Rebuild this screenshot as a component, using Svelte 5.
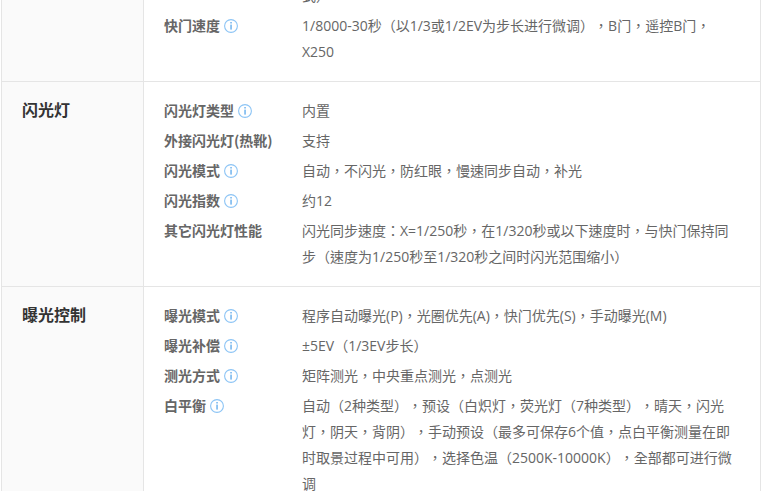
<script>
  const groups = [
    {
      title: '',
      rows: [
        { label: '', text: '式）' },
        { label: '快门速度', info: true, text: '1/8000-30秒（以1/3或1/2EV为步长进行微调），B门，遥控B门，X250' }
      ]
    },
    {
      title: '闪光灯',
      rows: [
        { label: '闪光灯类型', info: true, text: '内置' },
        { label: '外接闪光灯(热靴)', text: '支持' },
        { label: '闪光模式', info: true, text: '自动，不闪光，防红眼，慢速同步自动，补光' },
        { label: '闪光指数', info: true, text: '约12' },
        { label: '其它闪光灯性能', text: '闪光同步速度：X=1/250秒，在1/320秒或以下速度时，与快门保持同步（速度为1/250秒至1/320秒之间时闪光范围缩小）' }
      ]
    },
    {
      title: '曝光控制',
      rows: [
        { label: '曝光模式', info: true, text: '程序自动曝光(P)，光圈优先(A)，快门优先(S)，手动曝光(M)' },
        { label: '曝光补偿', info: true, text: '±5EV（1/3EV步长）' },
        { label: '测光方式', info: true, text: '矩阵测光，中央重点测光，点测光' },
        { label: '白平衡', info: true, text: '自动（2种类型），预设（白炽灯，荧光灯（7种类型），晴天，闪光灯，阴天，背阴），手动预设（最多可保存6个值，点白平衡测量在即时取景过程中可用），选择色温（2500K-10000K），全部都可进行微调' }
      ]
    }
  ];
</script>

<div class="page">
  <div class="table">
    {#each groups as group}
      <section class="group">
        <h3>{group.title}</h3>
        <div class="rows">
          {#each group.rows as row}
            <div class="row">
              <div class="label">
                {row.label}
                {#if row.info}
                  <svg class="info" width="14" height="14" viewBox="0 0 14 14" aria-hidden="true">
                    <circle cx="7" cy="7" r="6.4" fill="none" stroke="#8cc4f5" stroke-width="1.1" />
                    <rect x="6.3" y="3" width="1.5" height="1.5" fill="#6fb3ee" />
                    <rect x="6.3" y="5.6" width="1.5" height="5" fill="#6fb3ee" />
                  </svg>
                {/if}
              </div>
              <div class="value">{row.text}</div>
            </div>
          {/each}
        </div>
      </section>
    {/each}
  </div>
</div>

<style>
  :global(body) {
    margin: 0;
    background: #fff;
    font-family: "Noto Sans CJK SC", "Liberation Sans", sans-serif;
  }

  .page {
    height: 491px;
    overflow: hidden;
  }

  .table {
    margin: -33px 0 0 1px;
    width: 760px;
    box-sizing: border-box;
    border-left: 1px solid #e5e5e5;
    border-right: 1px solid #e5e5e5;
  }

  .group {
    display: flex;
    border-bottom: 1px solid #e5e5e5;
  }

  h3 {
    flex: 0 0 142px;
    box-sizing: border-box;
    margin: 0;
    padding: 14px 0 0 20px;
    background: #fafafa;
    border-right: 1px solid #e5e5e5;
    font-size: 16px;
    line-height: 26px;
    font-weight: 700;
    color: #333;
  }

  .rows {
    flex: 1;
    padding: 16px 26px 12px 20px;
  }

  .row {
    display: flex;
    margin-bottom: 4px;
  }

  .label {
    flex: 0 0 138px;
    font-size: 14px;
    line-height: 24px;
    font-weight: 700;
    color: #666;
    text-spacing-trim: space-all;
  }

  .info {
    vertical-align: -2px;
    margin-left: 1px;
  }

  .value {
    flex: 1;
    font-family: "Open Sans", "Noto Sans CJK TC", "Noto Sans CJK SC", sans-serif;
    font-size: 14px;
    line-height: 26px;
    color: #666;
    text-spacing-trim: space-all;
  }
</style>
